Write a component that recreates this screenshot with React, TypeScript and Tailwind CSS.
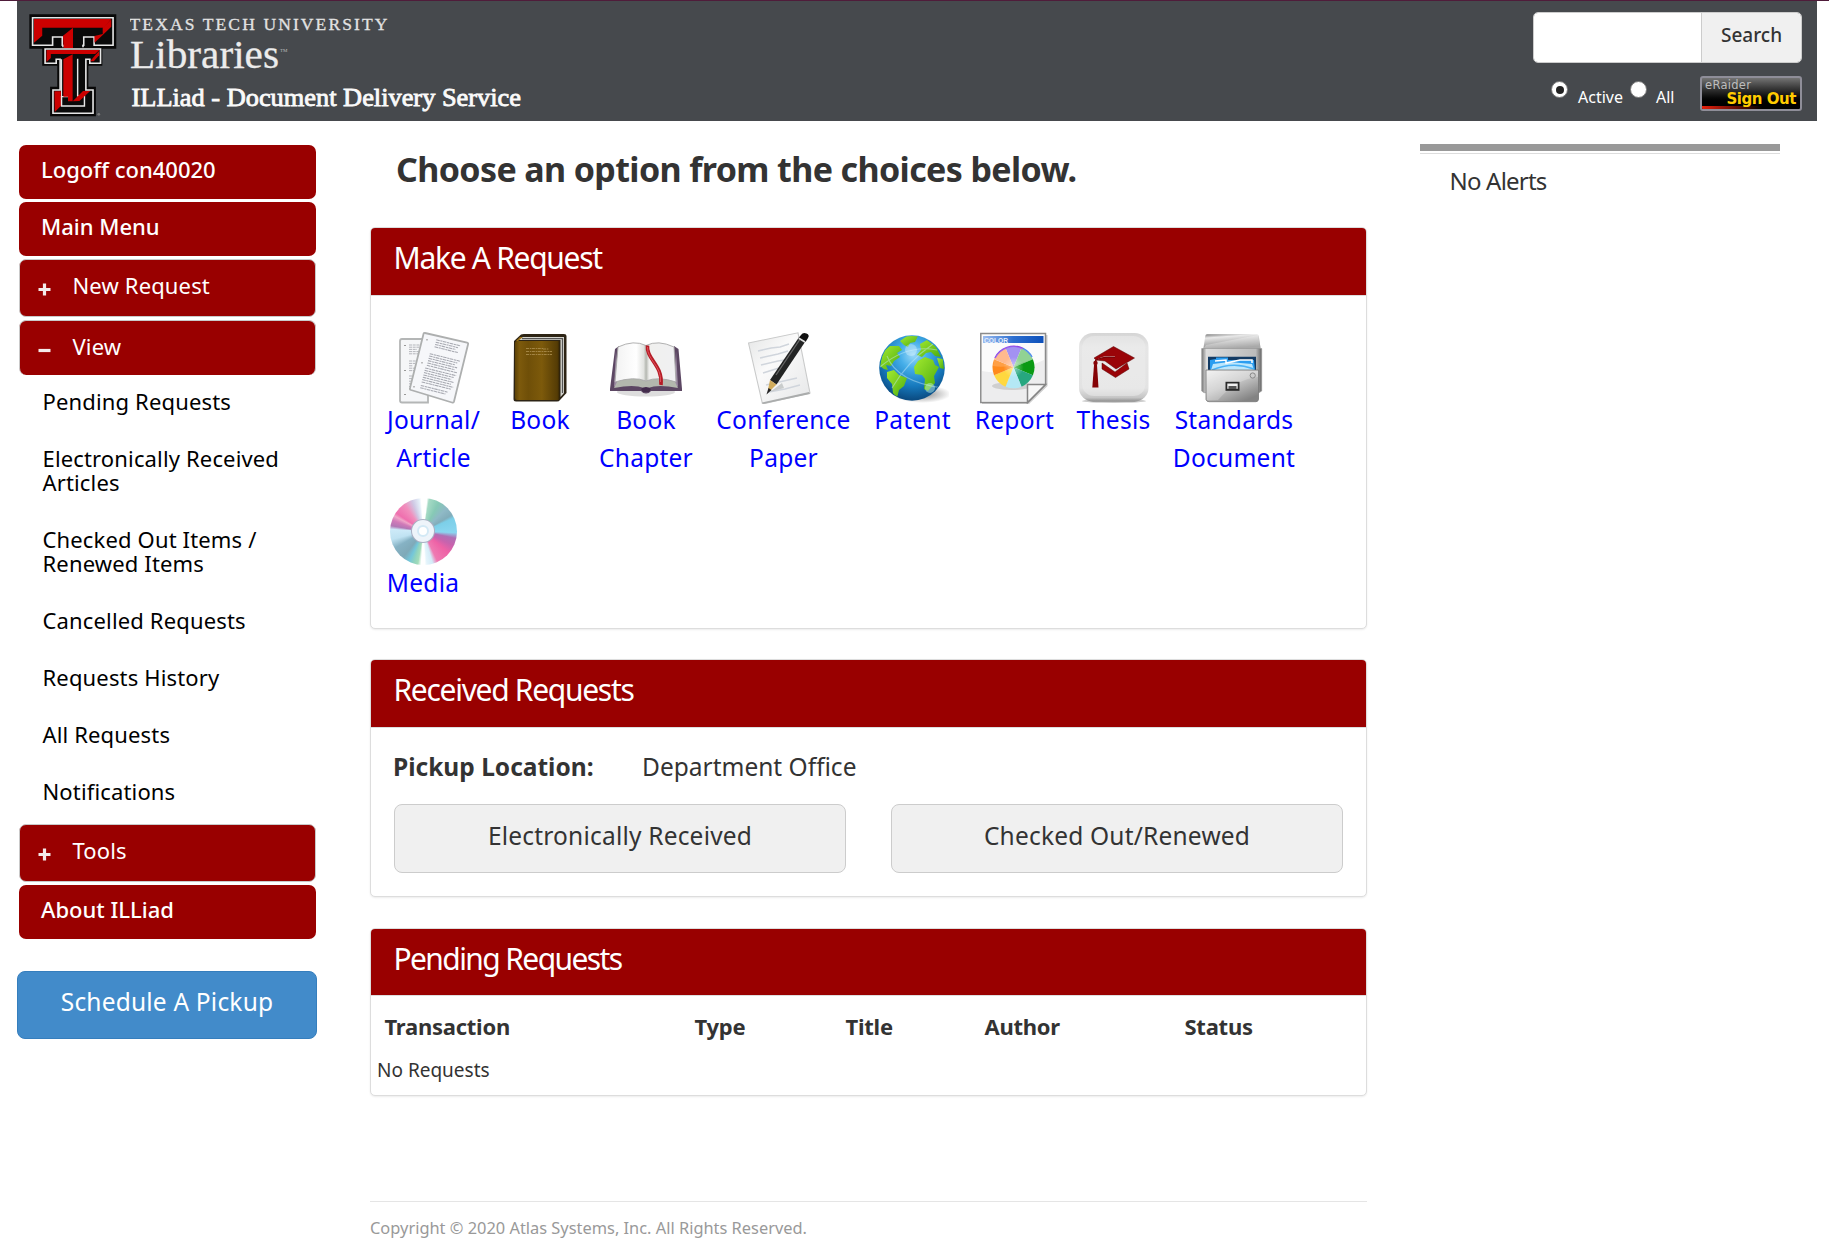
import type { ReactNode } from 'react';

function DoubleT() {
  return (
    <svg viewBox="81 42 246 309" preserveAspectRatio="none" className="h-[103px] w-[88px] shrink-0">
      <path d="M82 43H325V146H286V197H247V260H268V349H140V260H160V197H118V146H82Z" fill="#080808" />
      <path d="M91 53H316V136H263V111H234V136H174V111H147V136H91Z" fill="#0a0a0a" stroke="#e6e6e6" strokeWidth="4.5" />
      <path d="M177 115V140H231V115Z" fill="#0a0a0a" />
      <path d="M176 134V142M232 134V142" stroke="#e6e6e6" strokeWidth="4.5" />
      <path d="M95 57H311L290 83H118V107L95 128Z" fill="#cc0000" />
      <path d="M311 58V80L288 104L264 128V108L287 102V83Z" fill="#cc0000" />
      <path d="M176 107L204 83V144H178Z" fill="#cc0000" />
      <path
        d="M126 147H281V190H251V178H240V270H260V340H148V270H168V178H157V190H126Z"
        fill="#0a0a0a"
        stroke="#e6e6e6"
        strokeWidth="4.5"
      />
      <path d="M130 150H278L266 162H142V174L130 186Z" fill="#cc0000" />
      <path d="M277 153V166L262 184L252 184L266 166Z" fill="#cc0000" />
      <path d="M152 274H172V292L172 316L153 336Z" fill="#cc0000" />
      <path d="M217 176V288H236V318H172V290H188V178" fill="#0a0a0a" stroke="#e6e6e6" strokeWidth="4" />
      <path d="M177 178L203 163V304L190 304V290H177Z" fill="#cc0000" />
      <path d="M172 178V288" stroke="#e6e6e6" strokeWidth="3" />
      <path d="M203 304L232 273H252L222 303Z" fill="#cc0000" />
      <circle cx="276" cy="343" r="4" fill="#777" />
    </svg>
  );
}

function Wordmark() {
  return (
    <svg viewBox="0 0 410 103" className="h-[103px] w-[410px] shrink-0 font-['Liberation_Serif',serif]">
      <text x="-.5" y="15.5" fontSize="17.5" textLength="258" fill="#e2e2e2" stroke="#e2e2e2" strokeWidth="0.3">TEXAS TECH UNIVERSITY</text>
      <text x="0" y="54" fontSize="41" textLength="149" lengthAdjust="spacingAndGlyphs" fill="#ececec" stroke="#ececec" strokeWidth="0.3">Libraries</text>
      <text x="150" y="38" fontSize="5" fill="#bbb">TM</text>
      <text x="1.5" y="92" fontSize="25" textLength="389.5" lengthAdjust="spacingAndGlyphs" fill="#fafafa" stroke="#fafafa" strokeWidth="0.8">ILLiad - Document Delivery Service</text>
    </svg>
  );
}

const Icon = ({ children }: { children: ReactNode }) => (
  <svg viewBox="0 0 72 72" className="h-[72px] w-[72px] shrink-0">{children}</svg>
);

const textLines = (n: number, x: number, y: number, w: number, step: number) =>
  Array.from({ length: n }, (_, i) => `M${x} ${y + i * step}h${w - ((i * 7) % 5)}`).join('');

const JournalIcon = () => (
  <Icon>
    <path d="M2 9q0-2 2-2h26v63.500h-26q-2 0-2-2z" fill="#f5f6f8" stroke="#b4b6b6" strokeWidth="1.800" />
    <path d={textLines(5, 11, 13, 12, 2.2) + textLines(5, 11, 29, 8, 2.4) + textLines(5, 11, 44, 7, 2.6)} stroke="#b4b6bb" strokeWidth="1" strokeDasharray="3 .7" />
    <path d="M7 13v1M7 38v1M7 62v1" stroke="#999" strokeWidth="2" />
    <path d="M27 1L69 10.500q1.500.5 1 2L56 69.500q-.5 1.500-2 1L13 58q-1.500-.5-1-2L25.500 2q.3-1.300 1.500-1z" fill="#f6f7fa" stroke="#adafaf" strokeWidth="1.800" />
    <g transform="rotate(14 40 34)" stroke="#a6a8b0" strokeWidth="1.050" strokeDasharray="3.600 .6 2.200 .5">
      <path d={textLines(4, 32, 9, 25, 2.4)} />
      <path d={textLines(6, 29, 24, 31, 2.4)} />
      <path d={textLines(7, 28, 39, 32, 2.4)} />
      <path d={textLines(2, 28, 57, 28, 2.4)} />
    </g>
    <path d="M29 7v1.500M24 30v1.500M16 54v1.500" stroke="#aaa" strokeWidth="1.500" />
  </Icon>
);

const BookIcon = () => (
  <Icon>
    <defs>
      <linearGradient id="bk" x2="1"><stop offset="0" stopColor="#5d4206" /><stop offset=".1" stopColor="#7d5a0c" /><stop offset=".3" stopColor="#6f4f08" /><stop offset=".6" stopColor="#7d5a0b" /><stop offset=".95" stopColor="#553c05" /><stop offset="1" stopColor="#352503" /></linearGradient>
    </defs>
    <path d="M10 9L17 2.500Q18 2 20 2H60Q62.500 2 62.500 4V61L56 68Q55 69.500 53 69.500H12Q9.500 69.500 9.500 67z" fill="#2d2415" />
    <path d="M17 5H60V61L56.500 65V8H14z" fill="#d5d5cf" />
    <path d="M18 6.700H58.500V61" fill="none" stroke="#555" strokeWidth="1.200" />
    <path d="M11 11Q11 9 13 9H55.500V66.500Q55.500 68 54 68H13Q11 68 11 66z" fill="url(#bk)" />
    <path d="M16 5L12 9H14L19 5z" fill="#9a7114" />
    <path d="M22 16.500h17M39 17h6M22 19.500h26M22 22.500h26" stroke="#a88a4a" strokeWidth=".9" strokeDasharray="3 .8 1.500 .6" />
  </Icon>
);

const OpenBookIcon = () => (
  <Icon>
    <defs>
      <linearGradient id="pg" x2="1"><stop offset="0" stopColor="#f2f2f2" /><stop offset=".35" stopColor="#fff" /><stop offset=".47" stopColor="#e2e3e0" /><stop offset=".51" stopColor="#b4b7b0" /><stop offset=".56" stopColor="#f0f0ee" /><stop offset="1" stopColor="#f0f0f2" /></linearGradient>
    </defs>
    <ellipse cx="36" cy="60" rx="29" ry="4.500" fill="#ddd" />
    <path d="M5 17L9 14V52H64V14L68.500 17L72 57V59H41Q39 61.500 36 61.500T31 59H0V57z" fill="#5c4763" />
    <path d="M6 19L4 55L8 52z" fill="#9c8ba2" />
    <path d="M66 19L68 55L64 52z" fill="#9c8ba2" />
    <path d="M4 56L9 46Q24 44 36 49Q48 44 63 46L68 56Q48 52 38 56H34Q24 52 4 56z" fill="#b3b8ae" />
    <path d="M8 15Q24 7.500 36 13.500Q48 7.500 64 15L66 50Q48 44 36 49Q24 44 5 50z" fill="url(#pg)" stroke="#a9a9a9" strokeWidth=".9" />
    <path d="M31 57Q36 53 41 57L39 60H33z" fill="#432c4c" />
    <path d="M37.500 13.500C36 27 53 33 51 53" fill="none" stroke="#b51c26" strokeWidth="3.600" />
    <path d="M37.500 15C37 28 52 34 50.500 50" fill="none" stroke="#e0505a" strokeWidth="1" />
  </Icon>
);

const PaperPencilIcon = () => (
  <Icon>
    <defs>
      <linearGradient id="pp" x2="1" y2="1"><stop offset="0" stopColor="#e5e6e6" /><stop offset=".4" stopColor="#fafafa" /><stop offset="1" stopColor="#e6e7e8" /></linearGradient>
    </defs>
    <path d="M0.500 11L50 .8L62 61L14.500 72z" fill="url(#pp)" stroke="#c9caca" strokeWidth="1.100" />
    <path d="M14 70.500L61 60L62 62L15 72z" fill="#aaacac" />
    <g stroke="#d0d5dc" strokeWidth="1.500" fill="none">
      <path d="M10 19l13-3 9-1 9-3M12 26l18-4 10-3M13 33l17-4 13-2M15 41l16-5M18 53l31-7M21 60l16-3 15-4" />
    </g>
    <path d="M22 60L34 51L36 56z" fill="#c9cccc" />
    <path d="M50.500 6L57 10L28.500 52.500L22 48z" fill="#232424" />
    <path d="M51.500 8L28 43" stroke="#666" strokeWidth="1.300" />
    <path d="M53 3Q55 0 58.500 1.500T60 6L57.500 10L50.500 6z" fill="#111" />
    <path d="M50.800 6.200L57 10" stroke="#ddd" strokeWidth="1.800" />
    <path d="M22 48L28.500 52.500L22 59L20 57.500z" fill="#d1ac5c" />
    <path d="M20.500 56L23.500 58L18.500 62.500z" fill="#222" />
  </Icon>
);

const GlobeIcon = () => (
  <Icon>
    <defs>
      <radialGradient id="sea" cx=".52" cy=".3" r=".68"><stop offset="0" stopColor="#9bd9f8" /><stop offset=".3" stopColor="#45aee9" /><stop offset=".7" stopColor="#1679bd" /><stop offset="1" stopColor="#0b4d84" /></radialGradient>
      <linearGradient id="land" x2="1" y2="1"><stop offset="0" stopColor="#a3ea2f" /><stop offset="1" stopColor="#4bab0f" /></linearGradient>
      <radialGradient id="gs"><stop offset="0" stopColor="#888" /><stop offset="1" stopColor="#888" stopOpacity="0" /></radialGradient>
      <clipPath id="gc"><circle cx="35" cy="36" r="32" /></clipPath>
    </defs>
    <ellipse cx="45" cy="62" rx="29" ry="9" fill="url(#gs)" />
    <circle cx="35" cy="36" r="32.800" fill="url(#sea)" />
    <g clipPath="url(#gc)">
      <g fill="url(#land)">
        <path d="M23 9L30 4L41 4L38 10L33 11L31 15L27 13z" />
        <path d="M6 20L13 14L22 14L25 18L20 21L23 25L17 29L14 34L9 33L11 38L7 37L3 34z" />
        <path d="M10 40L17 38L22 43L30 46L27 54L22 58L20 66L16 61L15 52L10 46z" />
        <path d="M43 12L50 8L59 15L64 25L58 24L54 20L49 21L45 25L40 23L44 18z" />
        <path d="M41 29L48 25L56 28L58 33L62 35L57 44L58 51L51 59L47 57L48 47L45 43L38 42L37 35z" />
        <path d="M60 26L66 27L67 37L63 36z" />
      </g>
      <path d="M3 35Q30 12 60 18M10 24Q20 50 66 56M15 56Q30 30 56 12" stroke="#c9eefa" strokeWidth="1.100" fill="none" opacity=".45" />
      <circle cx="34" cy="18" r="6" fill="#e8f8ff" opacity=".35" />
      <circle cx="53" cy="56" r="5" fill="#c6f5e6" opacity=".45" />
    </g>
  </Icon>
);

const wheel = ['#8f7af0', '#79c87c', '#0a9a14', '#27a77f', '#b4e8f5', '#ffd83f', '#ff8a1c', '#ffab76'];
const ReportIcon = () => (
  <Icon>
    <defs>
      <linearGradient id="rb" x2="1"><stop offset="0" stopColor="#9dbdf0" /><stop offset=".5" stopColor="#2d6fd0" /><stop offset="1" stopColor="#0d50ba" /></linearGradient>
      <radialGradient id="rw"><stop offset="0" stopColor="#fff" stopOpacity=".5" /><stop offset=".5" stopColor="#fff" stopOpacity="0" /></radialGradient>
    </defs>
    <path d="M3 3H68.500V54L50 72H3z" fill="#ccc" />
    <path d="M1.800 1.500H66.500V52.500L48.500 70.500H1.800z" fill="#fbfbfb" stroke="#8b8b8b" strokeWidth="1.500" />
    <path d="M3 39Q30 44 65 28V52L48 69H3z" fill="#ededee" />
    <rect x="4" y="4" width="60.500" height="7" fill="url(#rb)" />
    <text x="5" y="10.500" fontSize="7.500" fontWeight="700" fill="#e6effc" textLength="24" lengthAdjust="spacingAndGlyphs" className="font-['Liberation_Sans',sans-serif]">COLOR</text>
    <ellipse cx="33" cy="54" rx="20" ry="4" fill="#cfcfcf" />
    {wheel.map((c, i) => (
      <path key={c} transform={`rotate(${i * 45 - 22.5} 34.500 35.300)`} d="M34.500 35.300V14.300A21 21 0 0 1 49.350 20.450z" fill={c} />
    ))}
    <circle cx="34.500" cy="35.300" r="20.500" fill="url(#rw)" />
    <path d="M16 26A21 21 0 0 1 44 16.500" fill="none" stroke="#8a45e8" strokeWidth="1.600" />
    <path d="M44 16.500A21 21 0 0 1 53 25" fill="none" stroke="#3f83e8" strokeWidth="1.500" />
    <path d="M14 34Q30 37 54 27A21 21 0 0 0 15 28z" fill="#fff" opacity=".18" />
    <path d="M48.500 52.500H66.500L48.500 70.500z" fill="#f7f7f7" stroke="#858585" strokeWidth="1.500" />
  </Icon>
);

const ThesisIcon = () => (
  <Icon>
    <defs>
      <linearGradient id="th" y2="1" x2="0"><stop offset="0" stopColor="#d5d5d5" /><stop offset=".2" stopColor="#e6e6e6" /><stop offset=".8" stopColor="#e3e3e3" /><stop offset=".94" stopColor="#c5c5c5" /><stop offset="1" stopColor="#8c8c8c" /></linearGradient>
    </defs>
    <ellipse cx="36" cy="69" rx="32" ry="2" fill="#ccc" />
    <rect x="1" y="1" width="69.500" height="68.700" rx="14" fill="url(#th)" />
    <rect x="4" y="4" width="63.500" height="60" rx="12" fill="#eee" opacity=".5" />
    <path d="M24 31L37 40L49 31L51 37L37.500 45.500L24 37z" fill="#9a0408" stroke="#5a0303" strokeWidth=".5" />
    <path d="M35.500 14.500L56.500 26L38 37L27 29L18 28L16 26z" fill="#9a0408" stroke="#5a0303" strokeWidth=".5" />
    <path d="M37 25Q24 23 18 29V34" fill="none" stroke="#cfaaaa" strokeWidth="1.200" />
    <path d="M37 25.500Q25 23.800 17.500 28.500V34" fill="none" stroke="#760206" strokeWidth="1.200" />
    <circle cx="17.500" cy="31" r="2.200" fill="#850306" />
    <path d="M16 33H19L20.500 55.500H14.300z" fill="#850306" />
  </Icon>
);

const CabinetIcon = () => (
  <Icon>
    <defs>
      <linearGradient id="cl" y2="1" x2=".3"><stop offset="0" stopColor="#777" /><stop offset=".25" stopColor="#e8e8e8" /><stop offset="1" stopColor="#858585" /></linearGradient>
      <linearGradient id="cb" x2="1"><stop offset="0" stopColor="#777" /><stop offset=".08" stopColor="#ddd" /><stop offset=".9" stopColor="#bbb" /><stop offset="1" stopColor="#666" /></linearGradient>
      <linearGradient id="cd" x2=".7" y2="1"><stop offset="0" stopColor="#f0f0f0" /><stop offset=".5" stopColor="#c9c9c9" /><stop offset="1" stopColor="#838383" /></linearGradient>
    </defs>
    <path d="M9 2.300H59Q60.500 2.300 60.800 4L62.700 17H5.300L7.300 4Q7.500 2.300 9 2.300z" fill="url(#cl)" />
    <path d="M8 13L60 3L62.500 16.500H5.500z" fill="#fff" opacity=".3" />
    <path d="M3.700 16.500H63.700V59L61 60.700H6L3.700 59z" fill="url(#cb)" stroke="#999" strokeWidth=".6" />
    <path d="M10 24.700H58V38H10z" fill="#123a63" />
    <path d="M12 38V28L18 27V25.500H30V28L56 28L57 38z" fill="#2b9df0" />
    <path d="M13 38L15 32L31 30L54 32L56 38z" fill="#bce6fc" />
    <path d="M17 29L28 28V31L42 28H54V31" fill="none" stroke="#fff" strokeWidth="1.500" />
    <path d="M14 38Q35 29 56 37" fill="none" stroke="#4ab2f5" strokeWidth="1.500" />
    <path d="M8 38H60.500V67.500Q60 69.700 58 69.700H11Q8.500 69.700 8 67.500z" fill="url(#cd)" stroke="#777" strokeWidth=".8" />
    <path d="M9 39H60V45Q38 47 20 68H9z" fill="#fff" opacity=".22" />
    <rect x="27.500" y="49.800" width="14" height="9" fill="#2a2a2a" />
    <rect x="29.300" y="51.500" width="10.400" height="5.300" fill="#f0f0f0" />
    <rect x="30.500" y="54" width="8" height="3" fill="#555" />
    <circle cx="54.700" cy="43.500" r="2.600" fill="#ccc" stroke="#888" strokeWidth="1" />
  </Icon>
);

const DiscIcon = () => (
  <div className="flex h-[72px] w-[72px] shrink-0 items-center justify-center">
    <div className="flex h-[67px] w-[67px] items-center justify-center rounded-full bg-[conic-gradient(#ffffff_0deg,#ffffff_6deg,#a5dac4_10deg,#86c9b5_28deg,#8fb9c6_45deg,#82adba_60deg,#7ccfe8_66deg,#8ad6f0_92deg,#b06fb4_102deg,#c763ae_115deg,#ee62a6_130deg,#ef7ab2_155deg,#d4ecf8_164deg,#e4f4fb_174deg,#ffffff_178deg,#ffffff_184deg,#a3dcba_190deg,#8ed2c0_198deg,#74c6da_206deg,#7fa9b8_218deg,#86b2c4_240deg,#bfe2f2_256deg,#cdeaf8_274deg,#b277b5_280deg,#d17ab8_290deg,#f0a6c8_298deg,#ef6fae_304deg,#f18fbd_325deg,#cfc8e4_340deg,#e4eef8_352deg,#ffffff_356deg)]">
      <div className="flex h-[24px] w-[24px] items-center justify-center rounded-full border-[1.5px] border-[#8c93ad]/70 bg-[#eef4fa]">
        <div className="h-[12px] w-[12px] rounded-full border-[2px] border-[#d3e9f5] bg-white" />
      </div>
    </div>
  </div>
);

const requests: { label: string; box: string; icon: ReactNode }[] = [
  { label: 'Journal/\nArticle', box: 'w-[97px]', icon: <JournalIcon /> },
  { label: 'Book', box: 'w-[70px]', icon: <BookIcon /> },
  { label: 'Book\nChapter', box: 'w-[96px]', icon: <OpenBookIcon /> },
  { label: 'Conference\nPaper', box: 'w-[133px]', icon: <PaperPencilIcon /> },
  { label: 'Patent', box: 'w-[79px]', icon: <GlobeIcon /> },
  { label: 'Report', box: 'w-[79px]', icon: <ReportIcon /> },
  { label: 'Thesis', box: 'w-[73px]', icon: <ThesisIcon /> },
  { label: 'Standards\nDocument', box: 'w-[122px]', icon: <CabinetIcon /> },
];

function RequestLink({ label, box, icon }: { label: string; box: string; icon: ReactNode }) {
  return (
    <a className={`flex flex-col items-center ${box}`}>
      {icon}
      <span className="mt-[-3.5px] whitespace-pre text-center text-[24.5px] leading-[38px] tracking-[0.25px] text-[#0000ff]">{label}</span>
    </a>
  );
}

const NavButton = ({ children, className = '' }: { children: ReactNode; className?: string }) => (
  <a className={`mr-[1px] ml-[2px] block h-[54px] rounded-[7px] bg-[#990000] pl-[22px] text-[22px] leading-[49px] font-medium text-white ${className}`}>{children}</a>
);

const NavToggle = ({ children, open, className = '' }: { children: ReactNode; open?: boolean; className?: string }) => (
  <div className={`mr-[1px] ml-[2px] flex border border-[#c9c9c9] bg-[#990000] pl-[18px] text-white ${className}`}>
    <svg viewBox="0 0 13 13" className="mt-[23px] h-[13px] w-[13px]">
      <path d={open ? 'M.5 6.500H12.500' : 'M.5 6.500H12.500M6.500 .5V12.500'} stroke="#f4eaea" strokeWidth="3.200" />
    </svg>
    <span className="ml-[21.5px] text-[22px] leading-[51px] tracking-[0.15px]">{children}</span>
  </div>
);

const views = ['Pending Requests', 'Electronically Received\nArticles', 'Checked Out Items /\nRenewed Items', 'Cancelled Requests', 'Requests History', 'All Requests', 'Notifications'];

function Panel({ title, className, titleClass, children }: { title: string; className: string; titleClass: string; children: ReactNode }) {
  return (
    <section className={`rounded-[5px] border border-[#dddddd] bg-white shadow-[0_1px_2px_rgba(0,0,0,0.08)] ${className}`}>
      <h2 className={`rounded-t-[4px] border-b border-[#dddddd] bg-[#990000] pl-[22.5px] text-[30px] leading-[60px] text-white ${titleClass}`}>{title}</h2>
      {children}
    </section>
  );
}

const GrayButton = ({ children }: { children: ReactNode }) => (
  <button className="h-[69px] w-[452px] rounded-[8px] border border-[#cccccc] bg-[#f0f0f0] pb-[6px] text-[24.5px] leading-[62px] tracking-[0.2px]">{children}</button>
);

export default function App() {
  return (
    <div className="h-[1260px] w-[1829px] overflow-hidden border-t border-[#4f1c3a] bg-white font-['Noto_Sans',sans-serif] text-[#333333]">
      <header className="ml-[17px] flex h-[120px] w-[1800px] justify-between bg-[#46494d] pt-[11px] pr-[15px] pl-[12px]">
        <div className="mt-[2px] flex gap-[13px]">
          <DoubleT />
          <Wordmark />
        </div>
        <div className="w-[269px]">
          <div className="flex h-[51px] overflow-hidden rounded-[5px] border border-[#cccccc]">
            <input className="w-[167px] bg-white" />
            <button className="flex-1 border-l border-[#cccccc] bg-[#f0f0f0] pb-[5px] text-[19px] font-medium">Search</button>
          </div>
          <div className="mt-[13px] flex">
            <span className="mt-[5px] ml-[18px] flex h-[17px] w-[17px] items-center justify-center rounded-full border border-[#777] bg-white">
              <span className="h-[8px] w-[8px] rounded-full bg-[#222]" />
            </span>
            <span className="ml-[10px] w-[46px] text-[16px] leading-[42px] text-white">Active</span>
            <span className="mt-[5px] ml-[6px] h-[17px] w-[17px] rounded-full border border-[#777] bg-white" />
            <span className="ml-[9px] w-[44px] text-[16px] leading-[42px] text-white">All</span>
            <button className="relative h-[35px] w-[102px] overflow-hidden rounded-[3px] border-2 border-[#8f8e99] bg-gradient-to-b from-[#747474] to-[#000000] to-85%">
              <span className="absolute bottom-0 left-0 h-[3px] w-[60px] bg-gradient-to-r from-[#e8200c] to-transparent" />
              <span className="absolute top-[-1px] left-[3px] font-['DejaVu_Sans',sans-serif] text-[11.5px] leading-[16px] tracking-[0.3px] text-[#bdbdbd]">eRaider</span>
              <span className="absolute top-[12px] right-[4px] font-['DejaVu_Sans',sans-serif] text-[15px] leading-[18px] font-bold tracking-[-0.45px] whitespace-nowrap text-[#ffcc00]">Sign Out</span>
            </button>
          </div>
        </div>
      </header>

      <div className="flex pl-[17px]">
        <nav className="w-[300px] pt-[24px]">
          <NavButton>Logoff con40020</NavButton>
          <NavButton className="mt-[3px]">Main Menu</NavButton>
          <NavToggle className="mt-[3px] h-[58px] rounded-[7px]">New Request</NavToggle>
          <NavToggle open className="mt-[3px] h-[55px] rounded-[7px] border-b-0">View</NavToggle>
          <ul className="mt-[-3px] h-[452px] pl-[25.5px]">
            {views.map((v) => (
              <li key={v} className="py-[16.5px] text-[22px] leading-[24px] tracking-[0.15px] whitespace-pre text-black">{v}</li>
            ))}
          </ul>
          <NavToggle className="h-[58px] rounded-[7px]">Tools</NavToggle>
          <NavButton className="mt-[3px]">About ILLiad</NavButton>
          <button className="mt-[32px] block h-[68px] w-[300px] rounded-[8px] border border-[#357ebd] bg-[#428bca] pb-[6px] text-[24.5px] leading-[60px] tracking-[0.2px] text-white">Schedule A Pickup</button>
        </nav>

        <main className="ml-[53px] w-[997px]">
          <h1 className="h-[106px] pt-[23px] pl-[26px] text-[34px] leading-[50px] font-bold tracking-[-0.62px]">Choose an option from the choices below.</h1>

          <Panel title="Make A Request" titleClass="h-[68px] tracking-[-1.3px]" className="h-[402px]">
            <div className="flex flex-wrap gap-x-[23px] gap-y-[18.5px] pt-[36px] pl-[14px]">
              {requests.map((r) => (
                <RequestLink key={r.label} {...r} />
              ))}
              <RequestLink label="Media" box="ml-[2px] w-[72px]" icon={<DiscIcon />} />
            </div>
          </Panel>

          <Panel title="Received Requests" titleClass="h-[68px] tracking-[-1.3px]" className="mt-[30px] h-[238px]">
            <div className="flex pt-[21px] pl-[22px] text-[24.5px] leading-[36px]">
              <b className="w-[249px]">Pickup Location:</b>
              <span>Department Office</span>
            </div>
            <div className="mt-[19px] flex gap-[45px] pl-[23px]">
              <GrayButton>Electronically Received</GrayButton>
              <GrayButton>Checked Out/Renewed</GrayButton>
            </div>
          </Panel>

          <Panel title="Pending Requests" titleClass="h-[67px] tracking-[-1.6px]" className="mt-[31px] h-[168px]">
            <div className="flex pt-[15px] pl-[13.5px] text-[22px] leading-[30px] font-bold tracking-[-0.25px]">
              <span className="w-[310px]">Transaction</span>
              <span className="w-[151px]">Type</span>
              <span className="w-[139px]">Title</span>
              <span className="w-[200px]">Author</span>
              <span>Status</span>
            </div>
            <p className="pt-[14px] pl-[6px] text-[19px] leading-[30px]">No Requests</p>
          </Panel>

          <footer className="mt-[105px] border-t border-[#e5e5e5] pt-[15px] text-[16.4px] leading-[21px] text-[#999999]">
            Copyright © 2020 Atlas Systems, Inc. All Rights Reserved.
          </footer>
        </main>

        <aside className="ml-[53px] w-[360px] pt-[23px]">
          <div className="h-[7px] bg-[#999999]" />
          <div className="mt-[2px] h-px bg-[#dddddd]" />
          <p className="pt-[12px] pl-[29.5px] text-[24px] leading-[30px] tracking-[-0.8px]">No Alerts</p>
        </aside>
      </div>
    </div>
  );
}
